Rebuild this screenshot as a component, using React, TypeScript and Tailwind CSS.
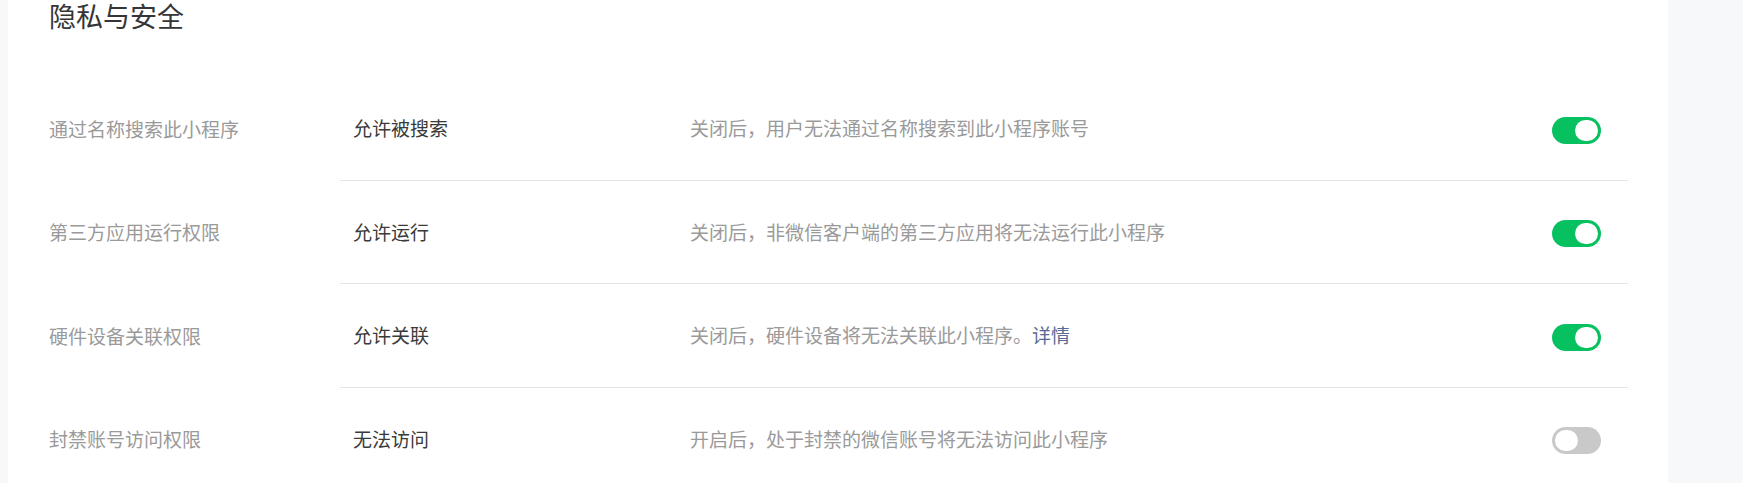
import React from "react";

type Row = {
  label: string;
  value: string;
  desc: string;
  link?: string;
  on: boolean;
};

const rows: Row[] = [
  { label: "通过名称搜索此小程序", value: "允许被搜索", desc: "关闭后，用户无法通过名称搜索到此小程序账号", on: true },
  { label: "第三方应用运行权限", value: "允许运行", desc: "关闭后，非微信客户端的第三方应用将无法运行此小程序", on: true },
  { label: "硬件设备关联权限", value: "允许关联", desc: "关闭后，硬件设备将无法关联此小程序。", link: "详情", on: true },
  { label: "封禁账号访问权限", value: "无法访问", desc: "开启后，处于封禁的微信账号将无法访问此小程序", on: false },
];

function Toggle({ on }: { on: boolean }) {
  return (
    <div
      className={
        on
          ? "relative mt-[4px] h-[27px] w-[49px] shrink-0 rounded-full bg-[#07c160]"
          : "relative mt-[4px] h-[27px] w-[49px] shrink-0 rounded-full bg-[#c9c9c9]"
      }
    >
      <div
        className={
          on
            ? "absolute right-[3px] top-[3px] h-[21px] w-[23px] rounded-full bg-white"
            : "absolute left-[3px] top-[3px] h-[21px] w-[23px] rounded-full bg-white"
        }
      />
    </div>
  );
}

export default function App() {
  return (
    <div
      className="flex h-[483px] w-[1743px] overflow-hidden bg-[#f7f8fa]"
      style={{ fontFamily: '"Microsoft YaHei", "Noto Sans CJK SC", "Noto Sans", sans-serif' }}
    >
      <div className="ml-[8px] w-[1660px] shrink-0 bg-white pl-[41px] pr-[40px]">
        <div className="h-[31px] text-[27px] leading-[31px] text-[#353535]">隐私与安全</div>
        <div className="mt-[46px] flex flex-col">
          {rows.map((r, i) => (
            <div key={i} className="flex h-[103.5px] shrink-0">
              <div className="flex w-[291px] shrink-0 items-center text-[19px] leading-[24px] text-[#9a9a9a]">
                {r.label}
              </div>
              <div className="flex flex-1 items-center border-b border-[#e5e5e5] pl-[13px] pr-[27px]">
                <div className="w-[337px] shrink-0 text-[19px] leading-[24px] text-[#3a3a3a]">{r.value}</div>
                <div className="flex-1 text-[19px] leading-[24px] text-[#9a9a9a]">
                  {r.desc}
                  {r.link && <span className="text-[#576b95]">{r.link}</span>}
                </div>
                <Toggle on={r.on} />
              </div>
            </div>
          ))}
        </div>
      </div>
    </div>
  );
}
